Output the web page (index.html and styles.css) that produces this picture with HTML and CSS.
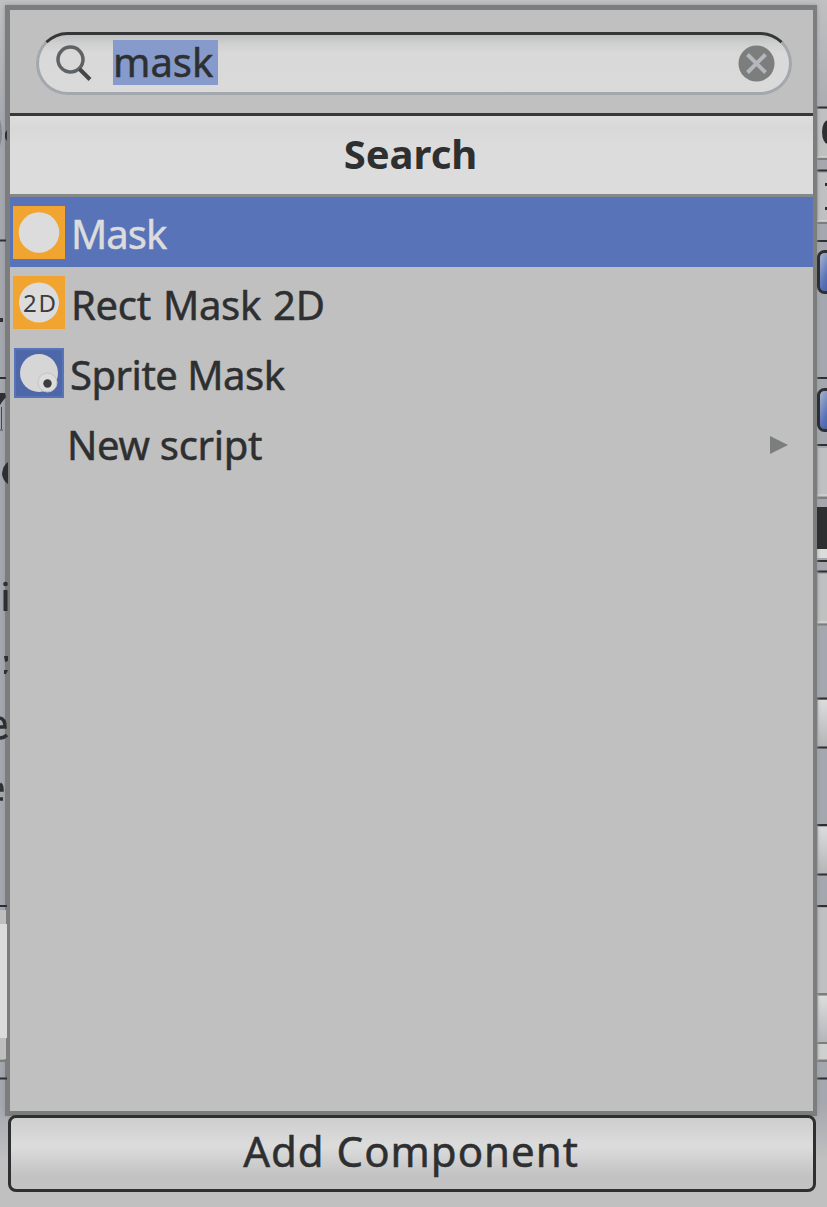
FILE: index.html
```html
<!DOCTYPE html>
<html lang="en">
<head>
<meta charset="utf-8">
<title>Add Component</title>
<link rel="stylesheet" href="styles.css">
</head>
<body>
<svg class="inspector" width="827" height="1207" viewBox="0 0 827 1207" aria-hidden="true">
  <defs>
    <linearGradient id="btn" x1="0" y1="0" x2="0" y2="1"><stop offset="0" stop-color="#dcdcdc"/><stop offset="1" stop-color="#b4b5b8"/></linearGradient>
    <linearGradient id="blue" x1="0" y1="0" x2="1" y2="1"><stop offset="0" stop-color="#b4bbd0"/><stop offset=".5" stop-color="#5873b8"/><stop offset="1" stop-color="#3c4c78"/></linearGradient>
    <linearGradient id="shade" x1="0" y1="0" x2="0" y2="1"><stop offset="0" stop-color="#a4a7ae" stop-opacity="0"/><stop offset=".12" stop-color="#a4a7ae"/><stop offset=".95" stop-color="#a4a7ae"/><stop offset="1" stop-color="#a4a7ae" stop-opacity="0"/></linearGradient>
  </defs>
  <rect x="0" y="0" width="10" height="1160" fill="url(#shade)"/>
  <rect x="813" y="0" width="14" height="1160" fill="url(#shade)"/>
  <g fill="#c0c0c1">
    <rect x="818" y="109" width="9" height="48"/><rect x="818" y="173" width="9" height="48"/>
    <rect x="818" y="448" width="9" height="48"/><rect x="818" y="574" width="9" height="50"/>
    <rect x="818" y="908" width="9" height="86"/><rect x="818" y="1044" width="9" height="15" fill="#cfcfcf"/>
  </g>
  <g fill="url(#btn)">
    <rect x="818" y="700" width="9" height="47"/><rect x="818" y="827" width="9" height="47"/><rect x="818" y="996" width="9" height="47"/>
    <rect x="817" y="549" width="10" height="9" fill="#dcdcdc"/>
  </g>
  <g stroke="#2e2f30" stroke-width="2">
    <path d="M816 107.500h11M816 170.500h11M816 241h11M816 378h11M816 445h11M816 561h11M816 571.500h11M816 698.500h11M816 747.500h11M816 825h11M816 874.500h11M816 906h11M816 1078.500h11"/>
  </g>
  <path d="M817 159h10M817 223h10M817 498h10M817 624.500h10M817 994h10M817 1043h10M817 1061h10" stroke="#7b7e7d" stroke-width="2"/>
  <path d="M817 157h10M817 221h10M817 495h10M817 622h10" stroke="#dcdcdc"/>
  <ellipse cx="828" cy="132" rx="6" ry="12" fill="#2e2f30"/>
  <path d="M825 183h2v3h-2zM825 207h2v3h-2z" fill="#2e2f30"/>
</svg>
<main class="popup">
  <div class="search-bar">
    <label class="search-field">
      <svg class="search-icon" width="38" height="38" viewBox="0 0 38 38"><circle cx="15.500" cy="14.500" r="12.500"/><path d="M24.500 24 35 34.500"/></svg>
      <span class="query">mask</span>
      <svg class="clear-icon" width="37" height="37" viewBox="0 0 37 37"><circle cx="18.500" cy="18.500" r="18"/><path d="M9.500 9.500l18 18M27.500 9.500l-18 18"/></svg>
    </label>
  </div>
  <h1 class="title">Search</h1>
  <ul class="results">
    <li class="row selected">
      <svg class="icon" width="52" height="53" viewBox="0 0 52 53"><path fill="#f2a430" d="M0 0h52v53H0z"/><circle cx="26" cy="26.500" r="20.300" fill="#dcdcdc"/></svg>
      <span class="name mask">Mask</span>
    </li>
    <li class="row">
      <svg class="icon rect" width="52" height="53" viewBox="0 0 52 53"><path fill="#f2a430" d="M0 0h52v53H0z"/><circle cx="26" cy="26.500" r="20" fill="#dcdcdc"/><text x="26.500" y="35.500" text-anchor="middle" textLength="33">2D</text></svg>
      <span class="name rect-mask">Rect Mask 2D</span>
    </li>
    <li class="row">
      <svg class="icon sprite" width="52" height="53" viewBox="0 0 52 53"><path fill="#4e67a8" stroke="#5873b8" stroke-width="2" d="M2 3h48v48H2z"/><circle cx="26" cy="27" r="19" fill="#d6d6d6"/><circle cx="34.500" cy="36.500" r="9.500" fill="#dcdcdc" stroke="#c3c3c3"/><circle cx="34.500" cy="37.500" r="4.200" fill="#3b3d3f"/></svg>
      <span class="name sprite-mask">Sprite Mask</span>
    </li>
    <li class="row">
      <span class="name new-script">New script</span>
      <svg class="arrow" width="20" height="20" viewBox="0 0 20 20"><path d="M1 1v18l18-9z"/></svg>
    </li>
  </ul>
</main>
<button class="add"><span>Add Component</span></button>
<svg class="edges" width="827" height="1207" viewBox="0 0 827 1207" aria-hidden="true">
  <path d="M817 507h10v42h-10z" fill="#2e2f30"/>
  <rect x="818.500" y="251.500" width="20" height="41" rx="6" fill="url(#blue)" stroke="#2e2f30" stroke-width="3"/>
  <rect x="818.500" y="389.500" width="20" height="41" rx="6" fill="url(#blue)" stroke="#2e2f30" stroke-width="3"/>
  <path d="M0 924h7v114H0z" fill="#dcdcdc"/><path d="M0 910h6v14H0zM0 1038h6v21H0z" fill="#bfbfc0"/>
  <path d="M0 240.500h6M0 378h6M0 906h7M0 1078.500h7" stroke="#2e2f30" stroke-width="2"/>
  <path d="M0 1061h7" stroke="#7b7e7d" stroke-width="2"/>
  <path d="M0 119q4 15 0 27z" fill="#85888b"/>
  <g fill="#2e2f30">
    <path d="M7 130v11l-2-3v-5zM0 318h3v4H0zM0 393h5l1 4-4 5-2 3zM8 462v22q-5-3-6-10 1-9 6-12z"/>
    <circle cx="5.500" cy="584" r="2.300"/><path d="M3.500 590h4v21h-4z"/>
    <path d="M4 656h4v5l-3 1zM4 670h4l-2 4h-2z"/>
  </g>
  <path d="M1.500 407v22M0 430h3" stroke="#45474a"/>
  <path d="M0 718q5 1 5 9H0M0 738q4 0 7-3M0 784q2 1 2 6H0M0 799h3" fill="none" stroke="#2e2f30" stroke-width="3.500"/>
</svg>
</body>
</html>
```
FILE: styles.css
```css
* { box-sizing: border-box; }
body {
  margin: 0;
  width: 827px;
  height: 1207px;
  padding: 5px 10px 0 5px;
  overflow: hidden;
  background: #c0c0c1;
  color: #2e2f30;
  font: 40px/70px "Noto Sans", "Open Sans", sans-serif;
  -webkit-text-stroke: .5px currentColor;
}
.inspector, .edges { position: absolute; top: 0; left: 0; pointer-events: none; }
.inspector { z-index: -1; }
.popup {
  display: flex;
  flex-direction: column;
  width: 812px;
  height: 1111px;
  border: 5px solid #7b7e7d;
  border-right-width: 4px;
  background: #c0c0c0;
  box-shadow: 0 0 4px #94979e;
}
.search-bar { height: 106px; padding: 22px 21px 0 26px; border-bottom: 3px solid #363839; }
.search-field {
  display: flex;
  align-items: center;
  height: 63px;
  padding: 0 17px 0 17px;
  border: 3px solid #a3a7ae;
  border-top: 3px solid #343637;
  border-radius: 32px;
  background: linear-gradient(#bfc0c1, #d0d0d0 9px, #d9d9d9 18px, #dadada);
}
.search-icon { margin-left: -1px; fill: none; stroke: #606365; stroke-width: 3.5; }
.search-icon path { stroke: #454748; stroke-width: 4; }
.query {
  width: 105px;
  height: 45px;
  margin: -3px 0 0 20px;
  background: #869acb;
  line-height: 43px;
  white-space: nowrap;
}
.clear-icon { margin-left: auto; margin-right: -3px; fill: #7b7e7d; }
.clear-icon path { stroke: #b4b7bd; stroke-width: 4; }
.title {
  height: 81px;
  margin: 0;
  padding-right: 2px;
  border-bottom: 3px solid #858889;
  background: linear-gradient(#dedede, #d8d8d8 12px, #dcdcdc 30px);
  font-size: 40px;
  line-height: 75px;
  text-align: center;
  -webkit-text-stroke: 0;
}
.results { margin: 0; padding: 0; list-style: none; }
.row { display: flex; align-items: center; height: 70.4px; padding-left: 3px; }
.selected { background: #5873b8; color: #dcdcdc; }
.name { margin-left: 6px; padding-top: 4px; line-height: 66px; white-space: nowrap; }
.mask { letter-spacing: -1px; }
.rect-mask { letter-spacing: -.3px; word-spacing: 2px; }
.sprite-mask { margin-left: 5px; letter-spacing: -.5px; }
.icon text { font-size: 24px; fill: #3b3d3f; }
.new-script { margin-left: 54px; letter-spacing: -.3px; }
.arrow { margin: 3px 24px 0 auto; fill: #7b7e7d; }
.add {
  display: flex;
  align-items: center;
  justify-content: center;
  width: 808px;
  height: 77px;
  margin: -1px 0 0 3px;
  padding: 0 2px 5px 0;
  border: 3px solid #2e2f30;
  border-radius: 8px;
  background: linear-gradient(#cecece, #dcdcdc 40%, #c2c2c2 82%, #c3c3c3);
  color: inherit;
  font: 42px/66px "Noto Sans", "Open Sans", sans-serif;
  letter-spacing: 1px;
  -webkit-text-stroke: .5px currentColor;
}
```
